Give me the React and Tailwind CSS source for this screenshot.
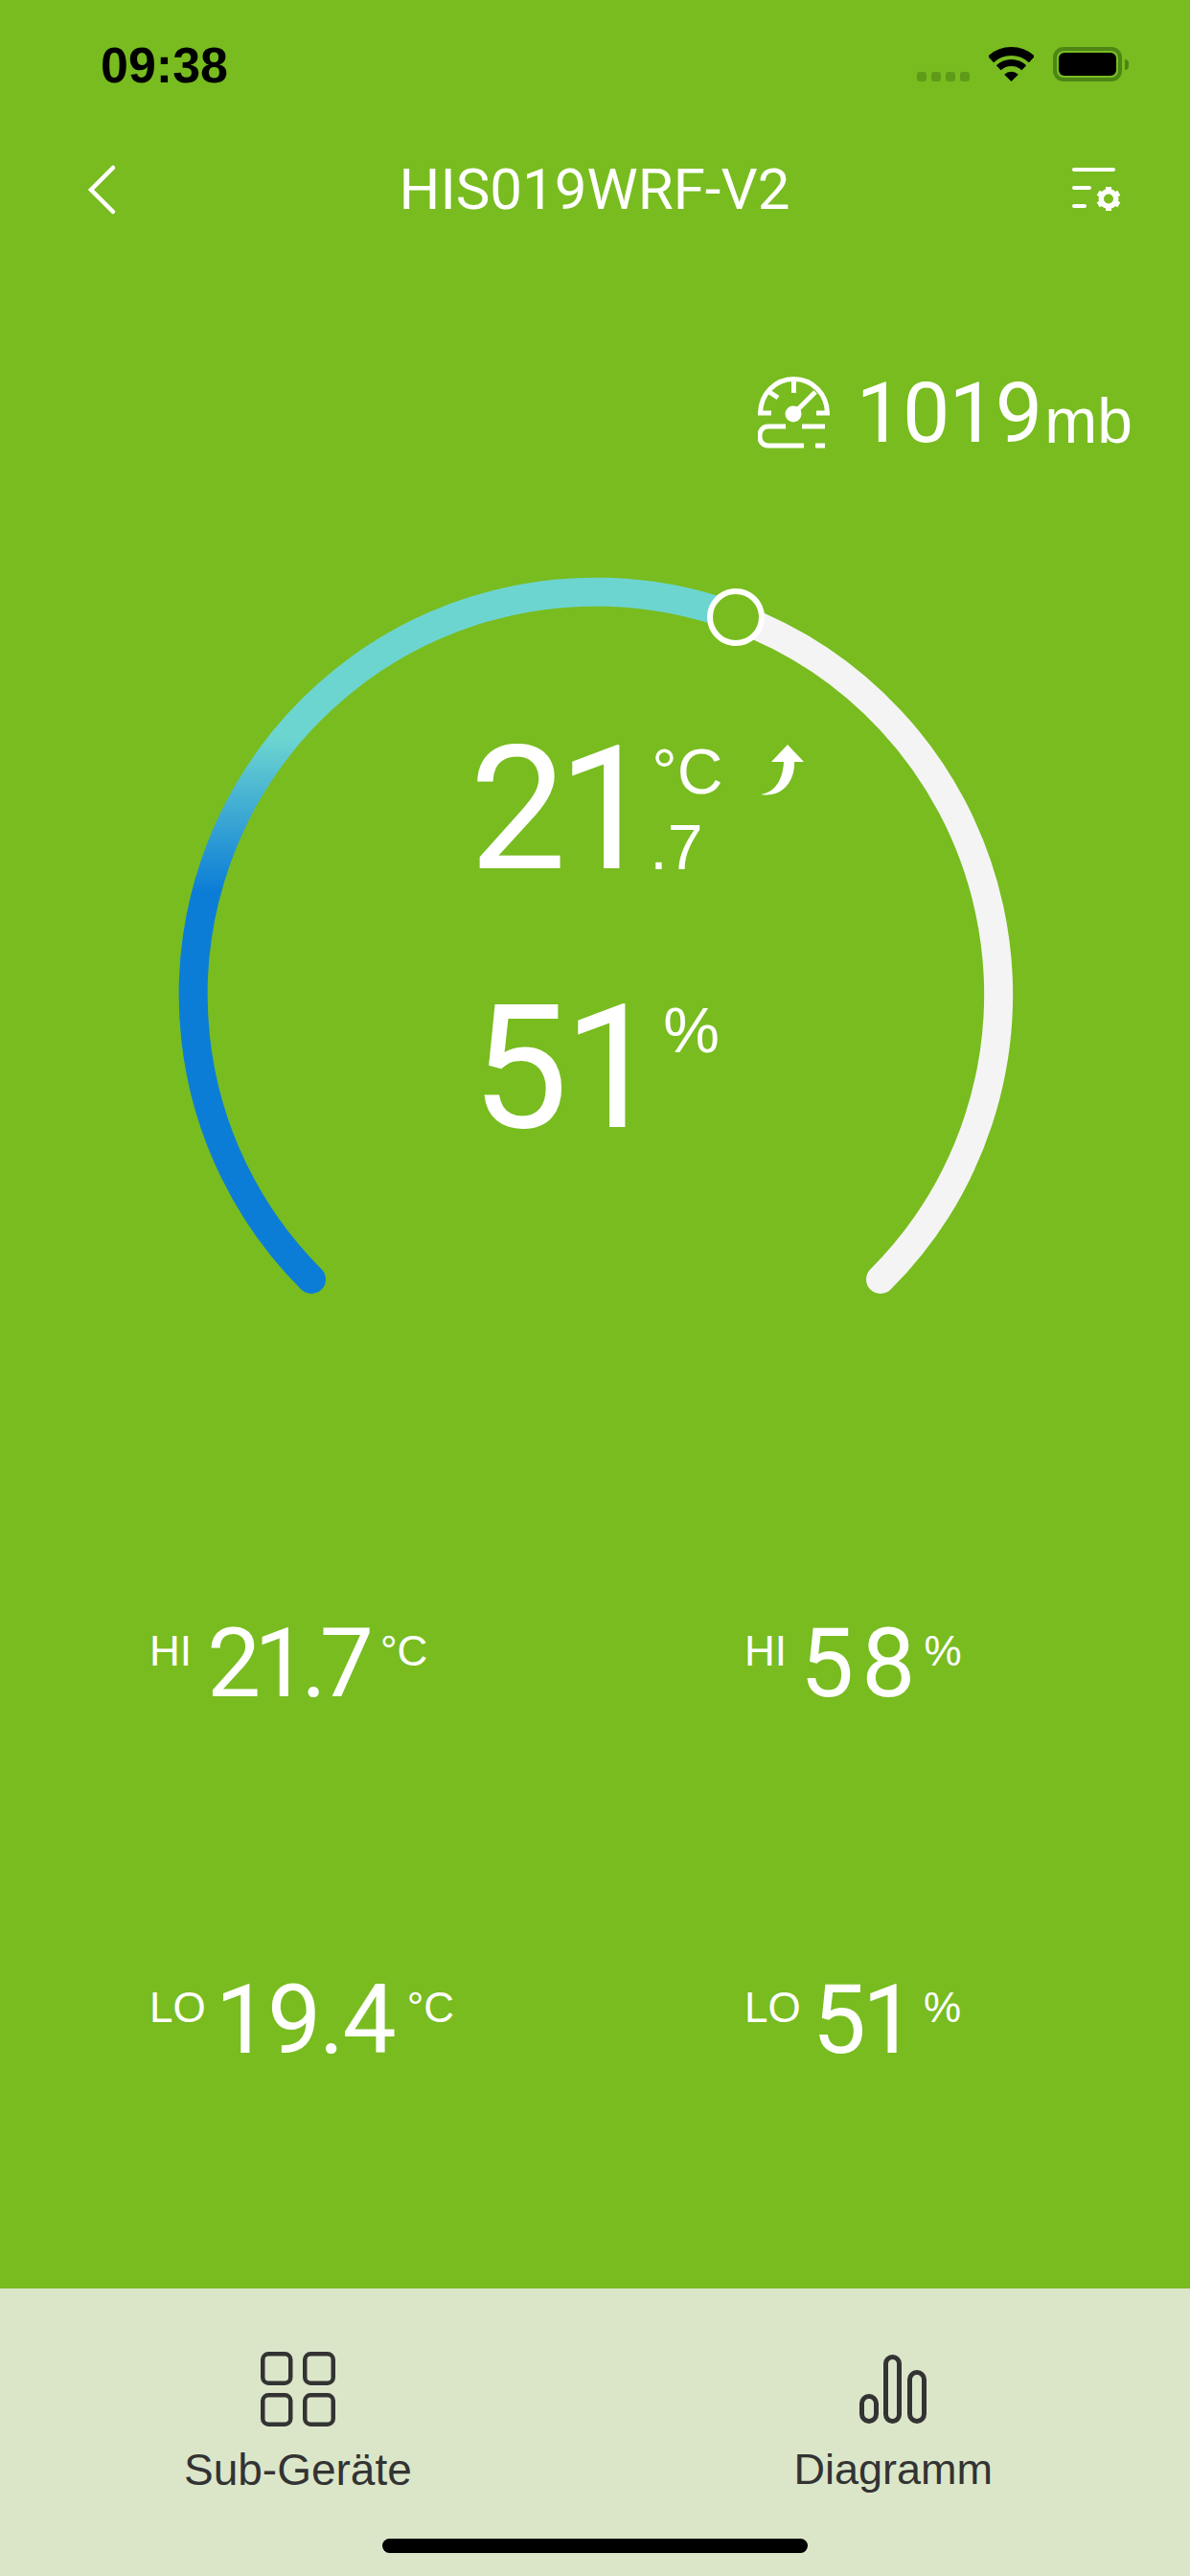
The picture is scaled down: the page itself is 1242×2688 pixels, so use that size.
import React from "react";

const font = { fontFamily: '"Liberation Sans", Arial, sans-serif' };
const digits = { fontFamily: 'Roboto, "Liberation Sans", sans-serif' };

function Wifi() {
  return (
    <svg width="47" height="36" viewBox="0 0 47 36" fill="none" stroke="#000" className="block">
      <path d="M2 13A31.5 31.5 0 0 1 45 13" strokeWidth="9" />
      <path d="M10.2 21.7A19.5 19.5 0 0 1 36.8 21.7" strokeWidth="7" />
      <path d="M23.5 36L16.2 28.7A10.5 10.5 0 0 1 30.8 28.7Z" fill="#000" stroke="none" />
    </svg>
  );
}

function Battery() {
  return (
    <div className="flex items-center">
      <div className="w-[72px] h-[36px] rounded-[11px] border-[4px] border-[#4e8515] p-[2px]">
        <div className="w-full h-full rounded-[6px] bg-black" />
      </div>
      <div className="ml-[3px] w-[4px] h-[11px] rounded-r-full bg-[#4e8515]" />
    </div>
  );
}

function SettingsIcon() {
  const teeth = [0, 60, 120, 180, 240, 300];
  return (
    <svg width="52" height="46" viewBox="0 0 52 46" fill="none" stroke="#fff" strokeWidth="4" strokeLinecap="round" className="block">
      <path d="M2 2H43M2 21H18M2 40H13" />
      <g transform="translate(38 32.5)">
        <circle r="7.75" strokeWidth="5.5" />
        {teeth.map((a) => (
          <path key={a} d="M0 -9V-12.5" strokeWidth="6" strokeLinecap="butt" transform={`rotate(${a})`} />
        ))}
      </g>
    </svg>
  );
}

function PressureIcon() {
  return (
    <svg width="75" height="75" viewBox="0 0 75 75" fill="none" stroke="#fff" strokeWidth="5" className="block">
      <path d="M14 38H2.5C3 18 18 2.5 37.5 2.5S72 18 72.5 38H61" />
      <path d="M37.5 4V17M12 16L21 22" />
      <path d="M37 39L60 16" />
      <circle cx="37" cy="39" r="8.5" fill="#fff" stroke="none" />
      <path d="M29 52H10.5C-1 52 -1 72 10.5 72H48M46 52H70M60 72H70" />
    </svg>
  );
}

function TrendIcon() {
  return (
    <svg width="45" height="54" viewBox="0 0 45 54" className="block">
      <path d="M28 0L45 18H35C36 38 22 56 0 52C14 50 23 38 24 18H11Z" fill="#fff" />
    </svg>
  );
}

function GridIcon() {
  return (
    <svg width="78" height="78" viewBox="0 0 78 78" fill="none" stroke="#333" strokeWidth="4.5" className="block">
      <rect x="2.25" y="2.25" width="29" height="30.5" rx="6" />
      <rect x="46.25" y="2.25" width="29.5" height="30.5" rx="6" />
      <rect x="2.25" y="45.25" width="29" height="30.5" rx="6" />
      <rect x="46.25" y="45.25" width="29.5" height="30.5" rx="6" />
    </svg>
  );
}

function BarsIcon() {
  return (
    <svg width="70" height="72" viewBox="0 0 70 72" fill="none" stroke="#333" strokeWidth="5" className="block">
      <rect x="2.5" y="43.5" width="15" height="26" rx="7.5" />
      <rect x="27.5" y="2.5" width="14" height="67" rx="7" />
      <rect x="52.5" y="18.5" width="15" height="51" rx="7.5" />
    </svg>
  );
}

function Gauge() {
  return (
    <svg width="1242" height="925" viewBox="0 475 1242 925" fill="none" className="block">
      <defs>
        <linearGradient id="arc" gradientUnits="userSpaceOnUse" x1="0" y1="770" x2="0" y2="930">
          <stop offset="0" stopColor="#6dd5d0" />
          <stop offset="1" stopColor="#0c7dd6" />
        </linearGradient>
      </defs>
      <path d="M768 644A420 420 0 0 1 919 1335" stroke="#f4f4f4" strokeWidth="30" strokeLinecap="round" />
      <path d="M325 1335A420 420 0 0 1 768 644" stroke="url(#arc)" strokeWidth="30" />
      <path d="M325 1335L325 1335" stroke="#0c7dd6" strokeWidth="30" strokeLinecap="round" />
      <circle cx="768" cy="644" r="27" fill="#78bc20" stroke="#fff" strokeWidth="6" />
    </svg>
  );
}

function Stat({ label, value, unit, valueClass, unitClass }) {
  return (
    <div className="flex items-start">
      <span className="mt-[15px] text-[44px] leading-none">{label}</span>
      <span style={digits} className={`text-[100px] leading-none ${valueClass}`}>{value}</span>
      <span className={`mt-[15px] text-[44px] leading-none ${unitClass}`}>{unit}</span>
    </div>
  );
}

export default function App() {
  return (
    <div style={font} className="w-[1242px] h-[2688px] bg-[#78bc20] flex flex-col text-white overflow-hidden">
      <div className="h-[130px] flex justify-between pl-[105px] pr-[64px] pt-[42px]">
        <span className="text-[52px] leading-none font-bold text-black">09:38</span>
        <div className="flex items-start pt-[7px]">
          <div className="mt-[26px] flex gap-[5px]">
            {[0, 1, 2, 3].map((i) => (
              <div key={i} className="w-[10px] h-[10px] rounded-[3px] bg-[#5f9a18]" />
            ))}
          </div>
          <div className="ml-[20px]"><Wifi /></div>
          <div className="ml-[20px]"><Battery /></div>
        </div>
      </div>

      <div className="h-[136px] flex items-center justify-between pl-[90px] pr-[71px]">
        <svg width="32" height="54" viewBox="0 0 32 54" fill="none" stroke="#fff" strokeWidth="4.5" strokeLinecap="round" className="block">
          <path d="M28 4L5 27L28 50" />
        </svg>
        <span style={digits} className="text-[60px] leading-none">HIS019WRF-V2</span>
        <SettingsIcon />
      </div>

      <div className="mt-[121px] h-[88px] flex items-start justify-end pr-[60px]">
        <div className="mt-[6px]"><PressureIcon /></div>
        <span style={digits} className="ml-[27px] text-[88px] leading-none tracking-[-1px]">1019</span>
        <span className="ml-[3px] mt-[19px] text-[66px] leading-none">mb</span>
      </div>

      <div className="relative h-[925px]">
        <Gauge />
        <div className="absolute left-[490px] top-[280px] flex flex-col">
          <div className="flex items-start">
            <span style={digits} className="text-[180px] leading-none tracking-[-9px]">21</span>
            <div className="ml-[6px] flex flex-col">
              <div className="flex items-start">
                <span className="mt-[17px] text-[66px] leading-none">°C</span>
                <div className="ml-[40px] mt-[22px]"><TrendIcon /></div>
              </div>
              <span className="-ml-[2px] mt-[13px] text-[66px] leading-none">.7</span>
            </div>
          </div>
          <div className="mt-[90px] ml-[2px] flex items-start">
            <span style={digits} className="text-[180px] leading-none tracking-[-5px]">51</span>
            <span className="ml-[8px] mt-[17px] text-[66px] leading-none">%</span>
          </div>
        </div>
      </div>

      <div className="pt-[286px] pl-[156px] grid grid-cols-[621px_1fr] gap-y-[272px]">
        <Stat label="HI" value="21.7" unit="°C" valueClass="ml-[16px] tracking-[-7px]" unitClass="ml-[14px]" />
        <Stat label="HI" value="58" unit="%" valueClass="ml-[14px] tracking-[8px]" unitClass="ml-[1px]" />
        <Stat label="LO" value="19.4" unit="°C" valueClass="ml-[10px] tracking-[-2px]" unitClass="ml-[13px]" />
        <Stat label="LO" value="51" unit="%" valueClass="ml-[12px] tracking-[-4px]" unitClass="ml-[12px]" />
      </div>

      <div className="mt-auto h-[300px] bg-[#dbe6c9] relative flex justify-between pt-[66px] text-[#333] pl-[192px] pr-[206px]">
        <div className="flex flex-col items-center">
          <GridIcon />
          <span className="mt-[22px] text-[46px] leading-none">Sub-Geräte</span>
        </div>
        <div className="flex flex-col items-center">
          <div className="mt-[3px]"><BarsIcon /></div>
          <span className="mt-[25px] text-[45px] leading-none">Diagramm</span>
        </div>
        <div className="absolute left-[399px] top-[261px] w-[444px] h-[15px] rounded-full bg-black" />
      </div>
    </div>
  );
}
